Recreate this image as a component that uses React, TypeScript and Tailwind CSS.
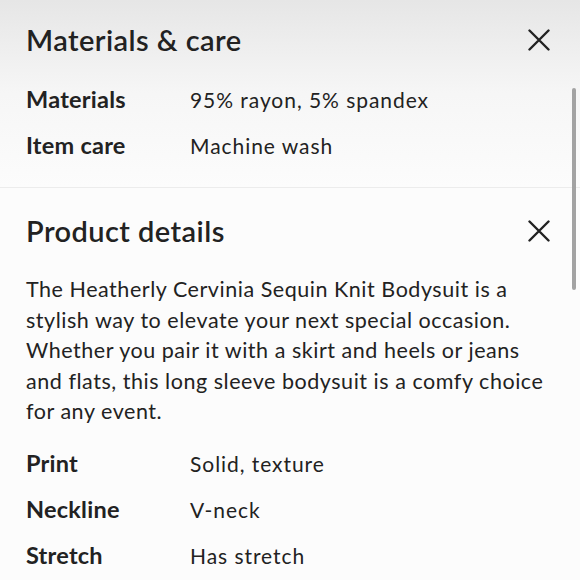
const font = { fontFamily: "Lato, 'Noto Sans', sans-serif" };

function CloseIcon() {
  return (
    <svg width="22" height="22" viewBox="0 0 22 22" className="mr-[4px] text-[#222]" fill="none">
      <path d="M1.5 1.5 L20.5 20.5 M20.5 1.5 L1.5 20.5" stroke="currentColor" strokeWidth="2.4" strokeLinecap="round" />
    </svg>
  );
}

function Row({ label, value }: { label: string; value: string }) {
  return (
    <div className="flex items-center h-[46px]">
      <div className="w-[164px] shrink-0 text-[23.5px] font-bold tracking-[0.01em] text-[#222]">{label}</div>
      <div className="text-[21px] tracking-[0.045em] text-[#222]">{value}</div>
    </div>
  );
}

export default function App() {
  return (
    <div className="relative w-[580px] h-[580px] overflow-hidden bg-[#fcfcfc]" style={font}>
      <section className="bg-gradient-to-b from-[#e6e6e6] via-[#f6f6f6] to-[#fcfcfc] px-[26px] pt-[20px] h-[188px] border-b border-[#ececec]">
        <div className="flex items-center justify-between h-[40px]">
          <h2 className="text-[29px] font-semibold tracking-[0.015em] text-[#222]">Materials &amp; care</h2>
          <CloseIcon />
        </div>
        <div className="mt-[17px]">
          <Row label="Materials" value="95% rayon, 5% spandex" />
          <Row label="Item care" value="Machine wash" />
        </div>
      </section>
      <section className="px-[26px] pt-[23px]">
        <div className="flex items-center justify-between h-[40px]">
          <h2 className="text-[29px] font-semibold tracking-[0.015em] text-[#222]">Product details</h2>
          <CloseIcon />
        </div>
        <p className="mt-[23px] text-[21.5px] leading-[30.5px] tracking-[0.025em] text-[#222] whitespace-nowrap">
          The Heatherly Cervinia Sequin Knit Bodysuit is a<br />
          stylish way to elevate your next special occasion.<br />
          Whether you pair it with a skirt and heels or jeans<br />
          and flats, this long sleeve bodysuit is a comfy choice<br />
          for any event.
        </p>
        <div className="mt-[14px]">
          <Row label="Print" value="Solid, texture" />
          <Row label="Neckline" value="V-neck" />
          <Row label="Stretch" value="Has stretch" />
        </div>
      </section>
      <div className="absolute right-[4px] top-[88px] w-[4px] h-[202px] rounded-full bg-[#a3a3a3]" />
    </div>
  );
}
